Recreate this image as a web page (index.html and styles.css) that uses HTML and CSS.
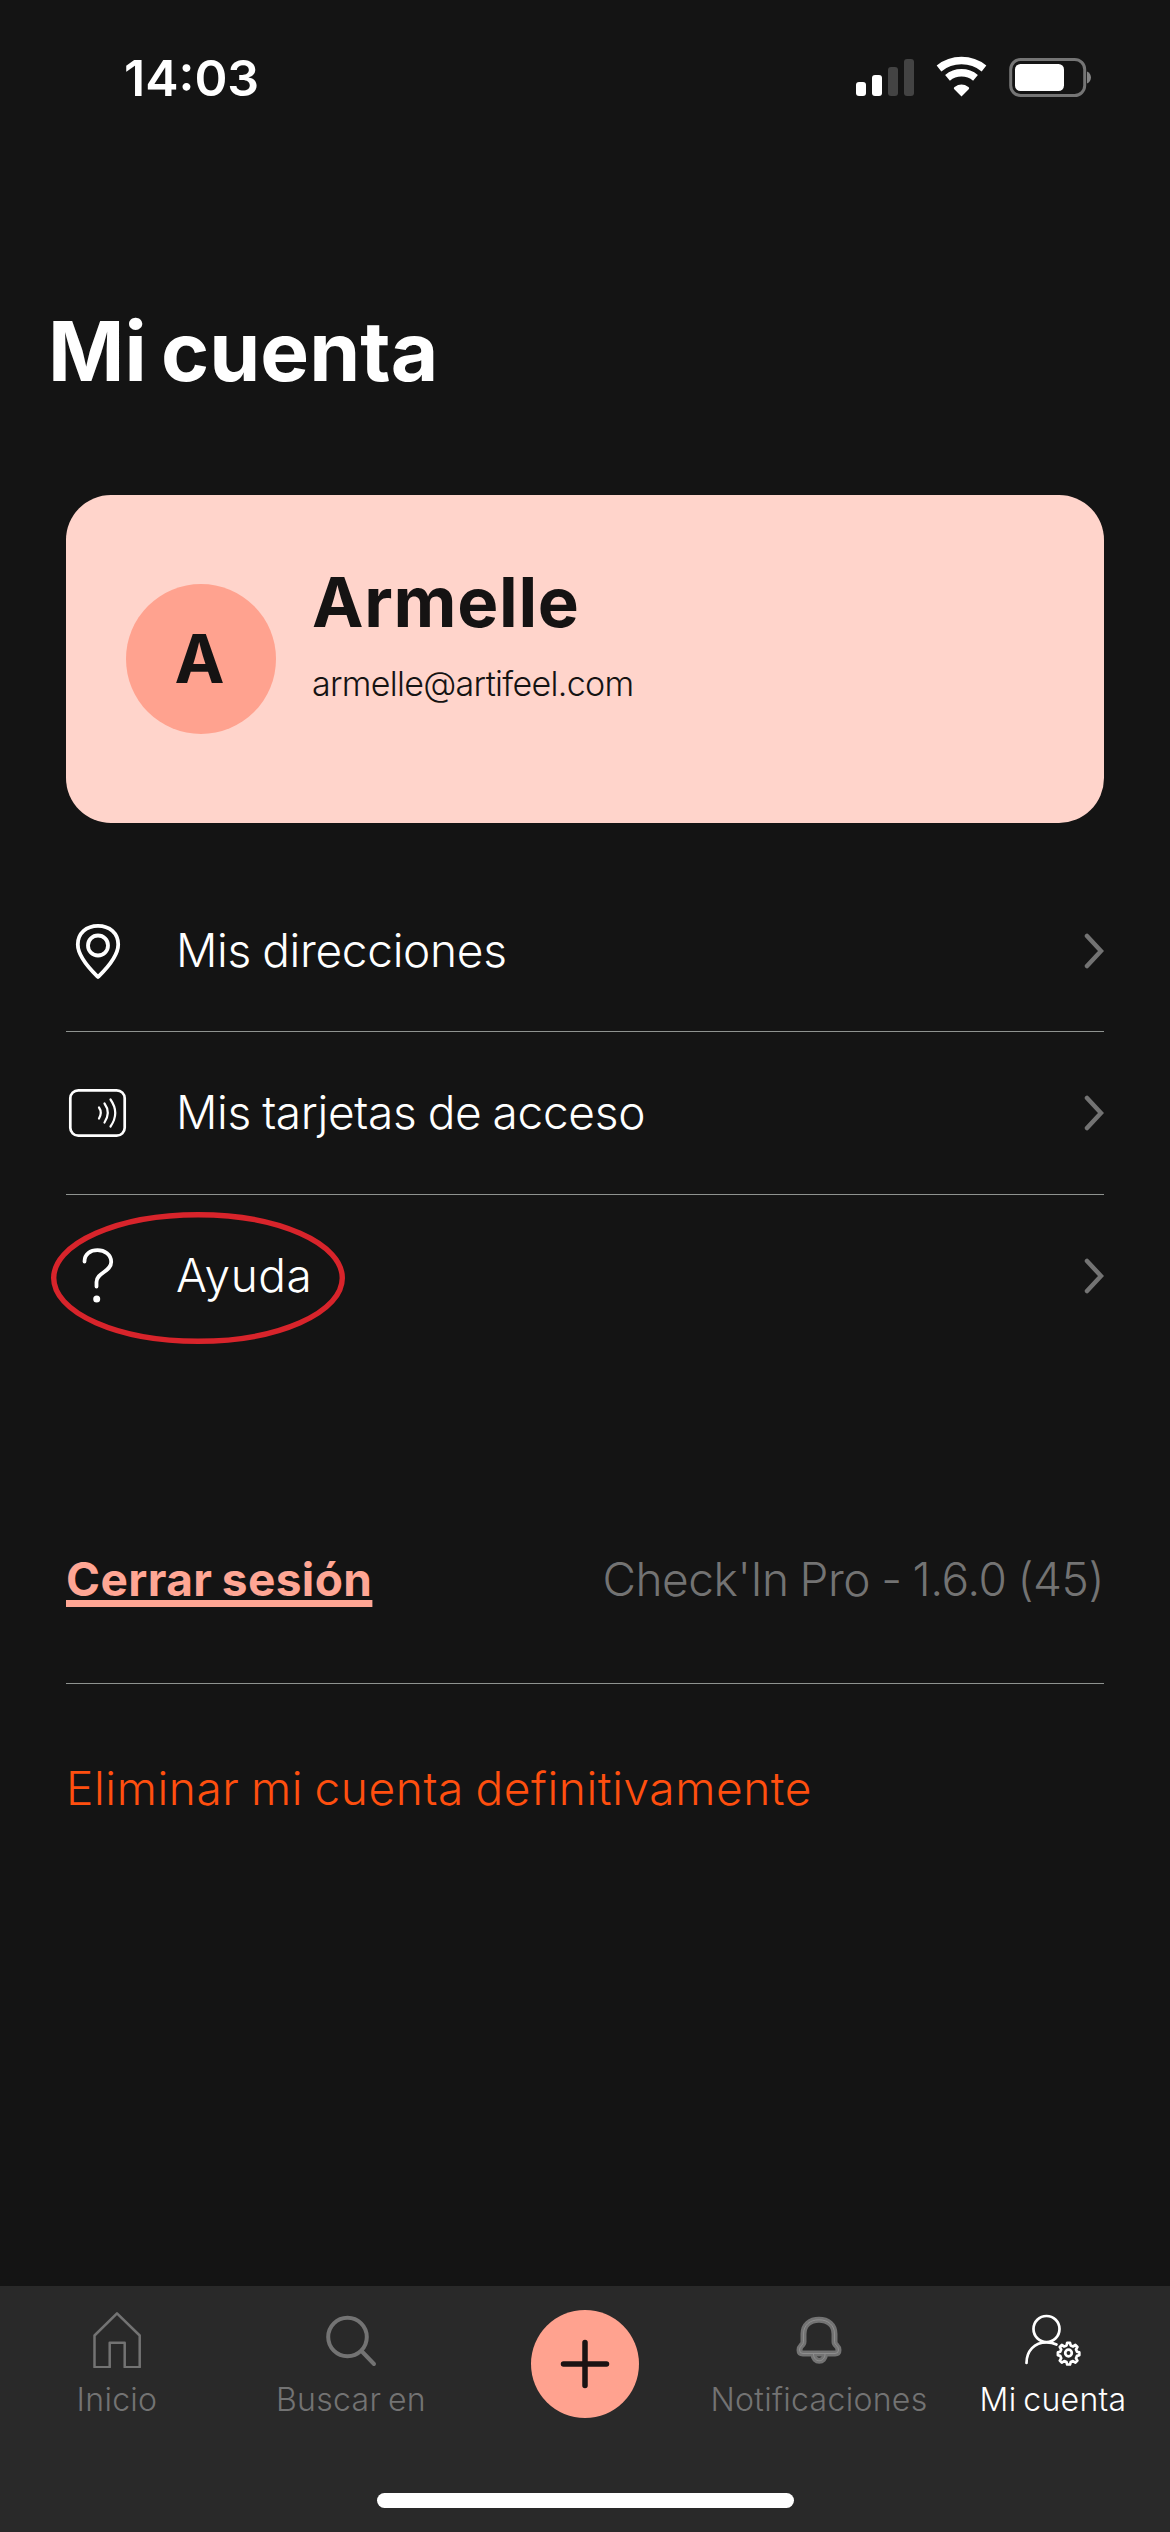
FILE: index.html
```html
<!DOCTYPE html>
<html lang="es">
<head>
<meta charset="utf-8">
<title>Mi cuenta</title>
<link rel="stylesheet" href="styles.css">
</head>
<body>
<header class="status">
  <span class="time">14:03</span>
  <svg class="status-icons" width="240" height="44" viewBox="0 0 240 44" fill="#fff">
    <rect x="4" y="26" width="10" height="14" rx="3"/>
    <rect x="20" y="19" width="10" height="21" rx="3"/>
    <rect x="36" y="11" width="10" height="29" rx="3" fill="#434343"/>
    <rect x="52" y="3" width="10" height="37" rx="3" fill="#434343"/>
    <g fill="none" stroke="#fff">
      <path d="M87 12.5A36 36 0 0 1 132 12.5" stroke-width="7.5" />
      <path d="M95.500 21.800A22 22 0 0 1 123.500 21.800" stroke-width="7.500"/>
    </g>
    <path d="M109.500 40.500L102.300 33.200C101.500 32.300 101.800 31.500 102.600 31A12 12 0 0 1 116.400 31C117.200 31.500 117.500 32.300 116.700 33.200Z"/>
    <rect x="158.700" y="3.500" width="74" height="36" rx="10" fill="none" stroke="#757575" stroke-width="3"/>
    <rect x="163" y="8" width="49" height="27" rx="5.500"/>
    <path d="M235 15.500C240.300 17.500 240.300 25.500 235 27.500Z" fill="#858585"/>
  </svg>
</header>

<main class="page">
  <h1 class="title">Mi cuenta</h1>

  <section class="card">
    <div class="avatar">A</div>
    <div class="info">
      <div class="name">Armelle</div>
      <div class="email">armelle@artifeel.com</div>
    </div>
  </section>

  <nav class="menu">
    <a class="row first">
      <svg class="row-icon" width="64" height="60" viewBox="0 0 64 60" fill="none" stroke="#fff" stroke-width="3.800">
        <path d="M32 56C28 52 11.800 37 11.800 23.500C11.800 12 20.500 4.800 32 4.800S52.200 12 52.200 23.500C52.200 37 36 52 32 56Z" stroke-linejoin="round"/>
        <circle cx="32" cy="24.500" r="10"/>
      </svg>
      <span class="label">Mis direcciones</span>
      <svg class="chevron" width="20" height="36" viewBox="0 0 20 36"><path d="M3 3L17 18L3 33"/></svg>
    </a>
    <a class="row">
      <svg class="row-icon" width="64" height="60" viewBox="0 0 64 60" fill="none" stroke="#fff">
        <rect x="4.300" y="7.300" width="54.400" height="45.400" rx="8" stroke-width="2.700"/>
        <g stroke-width="2.200" stroke-linecap="round">
          <path d="M33 24.500Q36.500 29.500 33 35.500"/>
          <path d="M38.500 20.500Q45 29.500 38.500 39.500"/>
          <path d="M44.500 16.500Q54 30 44.500 43.500"/>
        </g>
      </svg>
      <span class="label">Mis tarjetas de acceso</span>
      <svg class="chevron" width="20" height="36" viewBox="0 0 20 36"><path d="M3 3L17 18L3 33"/></svg>
    </a>
    <a class="row">
      <svg class="row-icon" width="64" height="60" viewBox="0 0 64 60">
        <path d="M18.500 15.500C18.500 8 24.500 4.200 31.500 4.200S45.200 8.500 45.200 16C45.200 26 30.500 26.500 30.500 36V40.500" fill="none" stroke="#fff" stroke-width="3.800" stroke-linecap="round"/>
        <circle cx="30.700" cy="53" r="3.500" fill="#fff"/>
      </svg>
      <span class="label short">Ayuda</span>
      <svg class="chevron" width="20" height="36" viewBox="0 0 20 36"><path d="M3 3L17 18L3 33"/></svg>
      <svg class="marker" width="294" height="132" viewBox="0 0 294 132"><ellipse cx="147" cy="66" rx="144.300" ry="63.300"/></svg>
    </a>
  </nav>

  <div class="session">
    <a class="logout">Cerrar sesión</a>
    <span class="version">Check'In Pro - 1.6.0 (45)</span>
  </div>
  <a class="delete">Eliminar mi cuenta definitivamente</a>
</main>

<footer class="tabbar">
  <div class="tabs">
    <a class="tab">
      <svg width="64" height="64" viewBox="0 0 64 64" fill="none" stroke="#737373" stroke-width="2.500" stroke-linejoin="round">
        <path d="M32 9.300L54.700 31.500V63.200H39.700V38.800H24.700V63.200H9.500V31.500Z"/>
      </svg>
      <span>Inicio</span>
    </a>
    <a class="tab">
      <svg width="64" height="64" viewBox="0 0 64 64" fill="none" stroke="#737373" stroke-width="4" stroke-linecap="round">
        <circle cx="28.500" cy="33" r="19.300"/><path d="M42.500 47L55 60"/>
      </svg>
      <span>Buscar en</span>
    </a>
    <a class="add">
      <svg width="60" height="60" viewBox="0 0 60 60" stroke="#1a1313" stroke-width="5.500" stroke-linecap="round"><path d="M30 8.500V51.500M8.500 30H51.500"/></svg>
    </a>
    <a class="tab alerts">
      <svg width="64" height="64" viewBox="0 0 64 64" stroke-linejoin="round">
        <g fill="none" stroke="#737373" stroke-width="6">
          <path d="M16.500 30C16.500 21 23 15.800 32 15.800S47.500 21 47.500 30V37.500Q47.500 40 49.500 41.500Q51.500 43.500 51.500 46Q51.500 49.500 48 49.500H16Q12.500 49.500 12.500 46Q12.500 43.500 14.500 41.500Q16.500 40 16.500 37.500Z"/>
          <path d="M26.500 50C26.500 59 38 59 38 50"/>
        </g>
        <g fill="none" stroke="#949494" stroke-width=".8">
          <path d="M16.500 30C16.500 21 23 15.800 32 15.800S47.500 21 47.500 30V37.500Q47.500 40 49.500 41.500Q51.500 43.500 51.500 46Q51.500 49.500 48 49.500H16Q12.500 49.500 12.500 46Q12.500 43.500 14.500 41.500Q16.500 40 16.500 37.500Z"/>
          <path d="M26.500 50C26.500 59 38 59 38 50"/>
        </g>
      </svg>
      <span>Notificaciones</span>
    </a>
    <a class="tab active">
      <svg width="64" height="64" viewBox="0 0 64 64" fill="none" stroke="#fff" stroke-width="2.700" stroke-linecap="round" stroke-linejoin="round">
        <circle cx="25.500" cy="25" r="13"/>
        <path d="M5.500 59C5.500 47 13.500 38.300 25.500 38.300Q31 38.300 35.500 40.500"/>
        <path d="M45.500 41.500l.7-2.700h2.800l.7 2.700l2.300 1l2.400-1.500l2 2l-1.400 2.400l1 2.300l2.300.7v2.800l-2.300.7l-1 2.300l1.400 2.400l-2 2l-2.400-1.500l-2.300 1l-.7 2.400h-2.800l-.7-2.400l-2.300-1l-2.400 1.500l-2-2l1.400-2.400l-1-2.300l-2.300-.7v-2.800l2.300-.7l1-2.300l-1.400-2.400l2-2l2.400 1.500Z"/>
        <circle cx="47.500" cy="49" r="3.300"/>
      </svg>
      <span>Mi cuenta</span>
    </a>
  </div>
  <div class="home-bar"></div>
</footer>
</body>
</html>
```
FILE: styles.css
```css
* { box-sizing: border-box; }

body {
  margin: 0;
  width: 1170px;
  height: 2532px;
  display: flex;
  flex-direction: column;
  background: #141414;
  color: #fff;
  font-family: "Inter", "Liberation Sans", sans-serif;
  font-weight: 330;
  white-space: nowrap;
  overflow: hidden;
}

.status {
  height: 156px;
  padding: 0 78px 0 124px;
  display: flex;
  align-items: center;
  justify-content: space-between;
}
.time { font-size: 50px; font-weight: 600; letter-spacing: 0; }

.page { padding: 145px 66px 0; }

.title {
  margin: 0 0 93px -18px;
  padding-top: 1px;
  font-size: 82px;
  line-height: 100px;
  font-weight: 700;
  word-spacing: -5px;
}

.card {
  height: 328px;
  padding-left: 60px;
  display: flex;
  gap: 36px;
  border-radius: 45px;
  background: #ffd4cb;
  color: #151313;
}
.avatar {
  width: 150px;
  height: 150px;
  align-self: center;
  border-radius: 50%;
  background: #ffa28f;
  font-size: 67px;
  line-height: 149px;
  font-weight: 700;
  text-align: center;
  padding-right: 3px;
}
.info { padding-top: 67px; display: flex; flex-direction: column; gap: 20px; }
.name { font-size: 69px; line-height: 80px; font-weight: 700; letter-spacing: 0.7px; }
.email { font-size: 34px; line-height: 44px; letter-spacing: -0.7px; }

.menu { margin-top: 46px; }
.row {
  position: relative;
  height: 163px;
  display: flex;
  align-items: center;
  border-bottom: 1px solid #8f9390;
}
.row.first { padding-top: 2px; }
.row:last-child { height: 162px; border-bottom: 0; }
.row-icon { margin-right: 46px; }
.label {
  flex: 1;
  padding-bottom: 2px;
  font-size: 46px;
  line-height: 60px;
  letter-spacing: -0.3px;
  word-spacing: -1.5px;
}
.short { letter-spacing: 0.6px; }
.chevron { fill: none; stroke: #737373; stroke-width: 4.5; stroke-linecap: round; }
.marker {
  position: absolute;
  left: -15px;
  top: 17px;
  fill: none;
  stroke: #d8242b;
  stroke-width: 5.4;
}

.session {
  margin-top: 192px;
  padding-bottom: 74px;
  display: flex;
  justify-content: space-between;
  border-bottom: 1px solid #8f9390;
  font-size: 46px;
  line-height: 60px;
}
.logout {
  color: #ffa694;
  font-weight: 700;
  letter-spacing: 0.4px;
  word-spacing: -2px;
  text-decoration: underline;
  text-decoration-thickness: 7px;
  text-underline-offset: 4px;
  text-decoration-skip-ink: none;
}
.version { color: #737373; letter-spacing: -0.45px; word-spacing: -1.5px; }
.delete {
  display: block;
  margin-top: 74px;
  color: #ff4f0f;
  font-size: 46px;
  line-height: 60px;
  letter-spacing: 0.6px;
  word-spacing: -2px;
}

.tabbar {
  height: 246px;
  margin-top: auto;
  display: flex;
  flex-direction: column;
  justify-content: space-between;
  align-items: center;
  padding: 18px 0 24px;
  background: #292929;
}
.tabs { width: 1170px; display: grid; grid-template-columns: repeat(5, 234px); }
.tab {
  display: flex;
  flex-direction: column;
  align-items: center;
  gap: 12px;
  color: #737373;
  font-size: 32px;
  line-height: 40px;
  letter-spacing: 0.3px;
  word-spacing: -2.5px;
}
.active { color: #fff; }
.add {
  width: 108px;
  height: 108px;
  margin: 6px auto 0;
  display: grid;
  place-items: center;
  border-radius: 50%;
  background: #ffa28f;
}
.home-bar { width: 417px; height: 15px; border-radius: 8px; background: #fff; }
```
